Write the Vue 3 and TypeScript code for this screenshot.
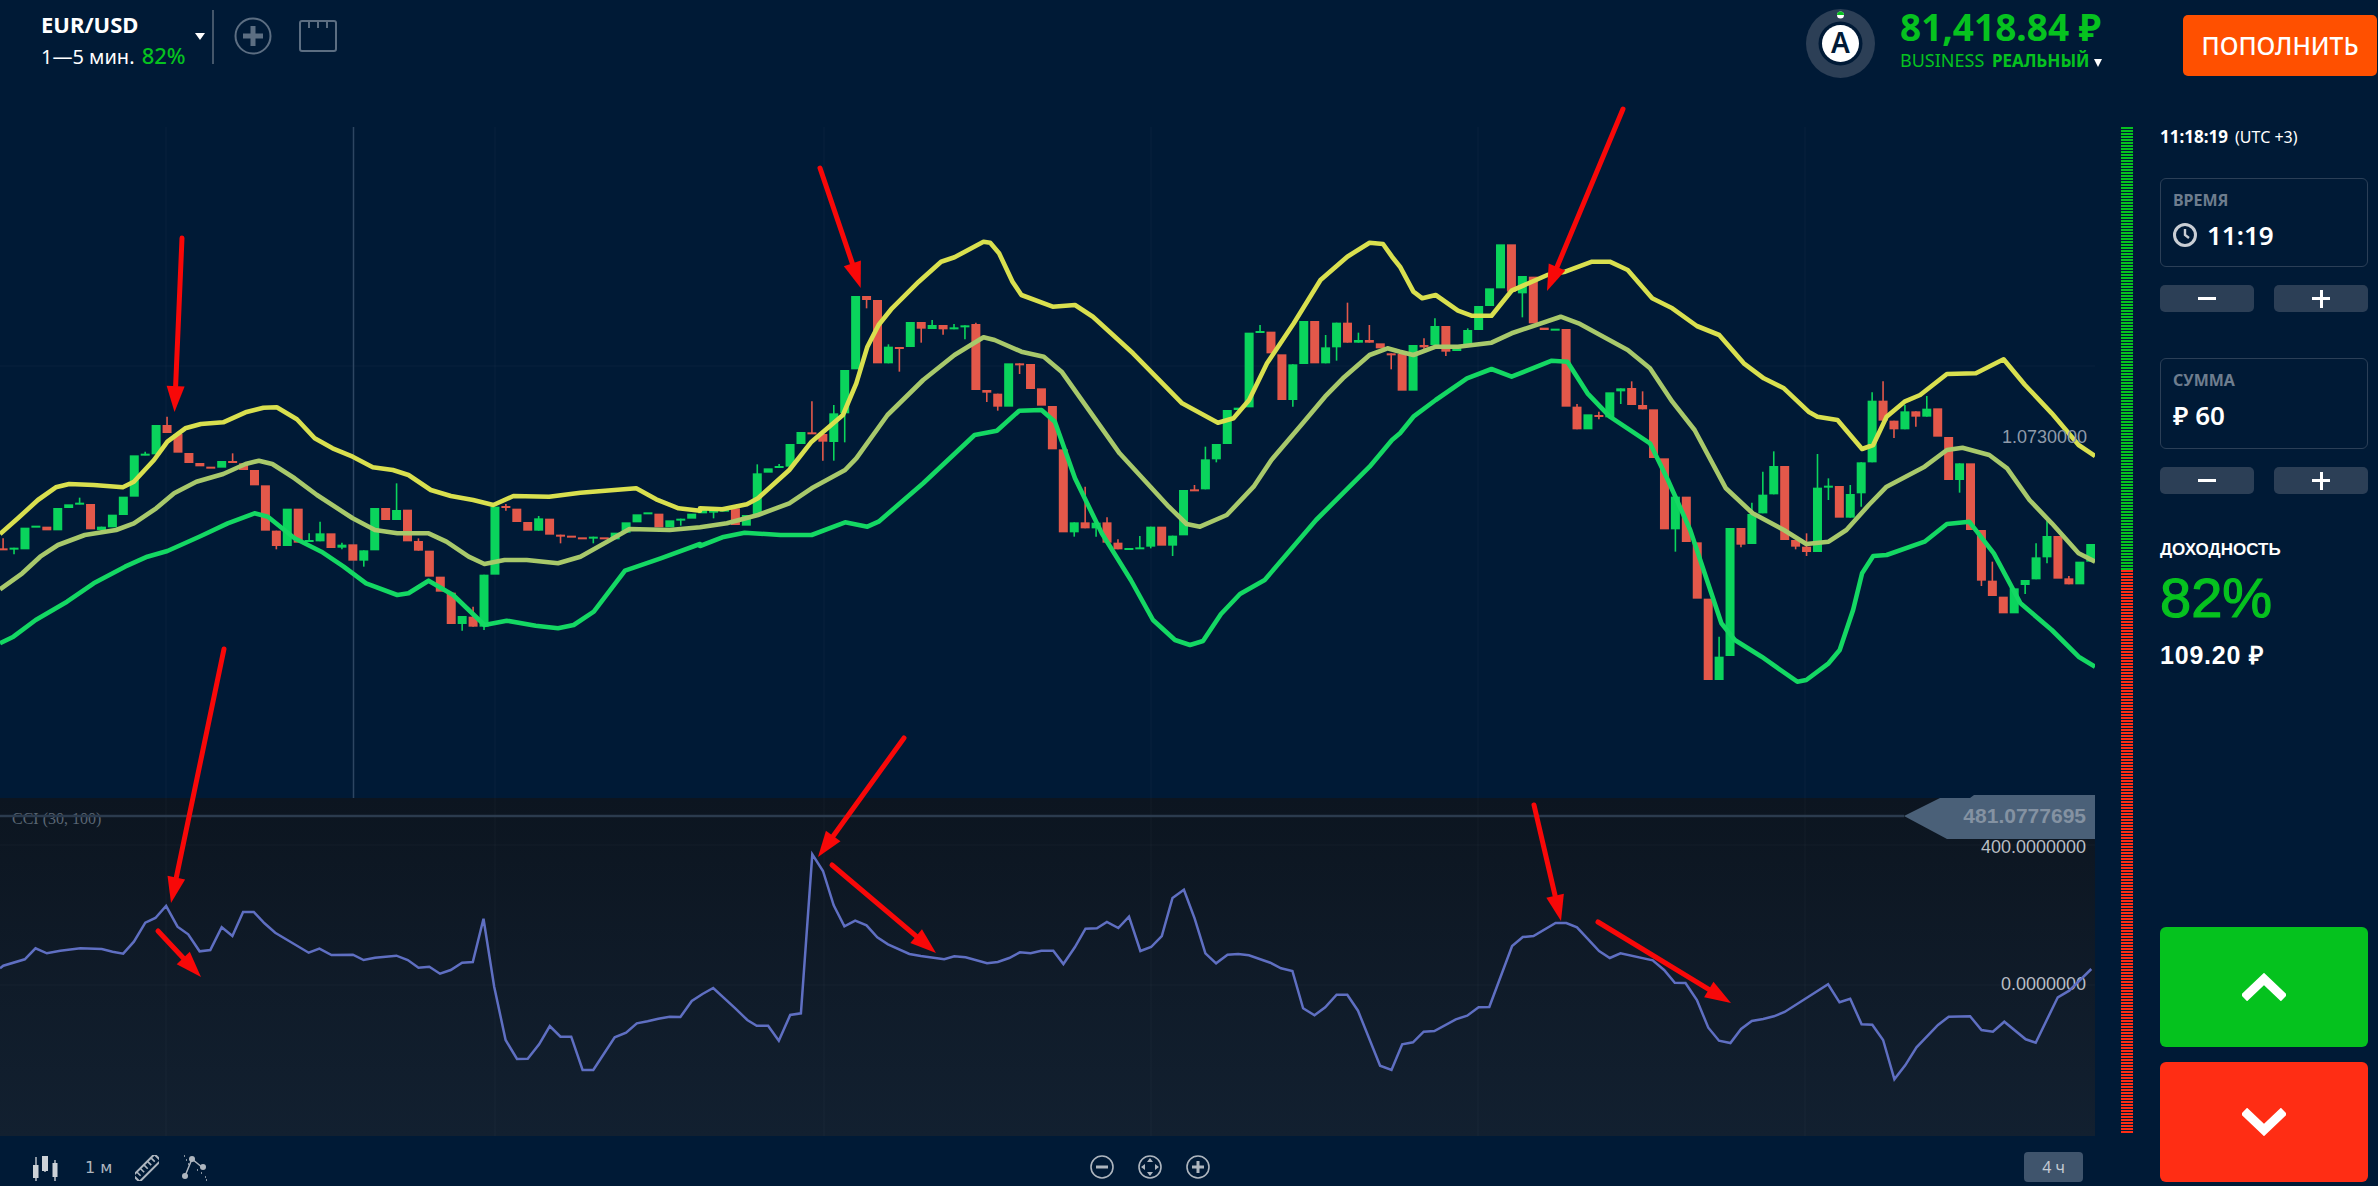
<template>
  <div class="terminal">
    <header class="topbar">
      <div class="pair">
        <div class="pair-name">EUR/USD</div>
        <div class="pair-info">1—5 мин. <b>82%</b></div>
      </div>
      <span class="caret"></span>
      <span class="divider"></span>
      <svg class="add-icon" width="38" height="38" viewBox="0 0 38 38">
        <circle cx="19" cy="19" r="17.5" fill="none" stroke="#5c6e82" stroke-width="2" />
        <path d="M19 9v20M9 19h20" stroke="#5c6e82" stroke-width="5" />
      </svg>
      <svg class="layout-icon" width="40" height="34" viewBox="0 0 40 34">
        <rect x="2" y="2" width="36" height="30" rx="2" fill="none" stroke="#5c6e82" stroke-width="2" />
        <path d="M11 2v7M20 2v7M29 2v7" stroke="#5c6e82" stroke-width="2" />
      </svg>
      <div class="account">
        <svg class="avatar" width="69" height="69" viewBox="0 0 69 69">
          <circle cx="34.5" cy="34.5" r="34.5" fill="#2c3f56" />
          <circle cx="34.5" cy="34.5" r="22" fill="#001a36" />
          <circle cx="34.5" cy="34.5" r="18.5" fill="#fff" />
          <circle cx="34.5" cy="6" r="3.5" fill="#fff" />
          <path d="M31 6a3.5 3.5 0 0 1 7 0z" fill="#06c21f" />
          <text x="34.5" y="44" text-anchor="middle" class="avatar-letter">A</text>
        </svg>
        <div class="balance">
          <div class="balance-sum">81,418.84 ₽</div>
          <div class="balance-type">BUSINESS <b>РЕАЛЬНЫЙ</b> <i></i></div>
        </div>
      </div>
      <button class="deposit">ПОПОЛНИТЬ</button>
    </header>

    <div class="workspace">
      <div class="chart-col">
        <svg class="chart" width="2095" height="1052" viewBox="0 84 2095 1052">
          <defs>
            <linearGradient id="paneBg" x1="0" y1="0" x2="0" y2="1">
              <stop offset="0" stop-color="#0c1520" />
              <stop offset="1" stop-color="#122030" />
            </linearGradient>
          </defs>
          <rect x="0" y="798" width="2095" height="338" fill="url(#paneBg)" />
          <path v-for="x in gridX" :key="x" :d="`M${x} 127V1136`" class="grid" />
          <path d="M0 366H2095M0 845H2095M0 985H2095" class="grid" />
          <path d="M353.5 127V798" class="cross" />

          <g v-for="(c, i) in candles" :key="i" :fill="c.color" :stroke="c.color">
            <path v-if="c.wick" :d="c.wick" stroke-width="1.6" fill="none" />
            <rect :x="c.x - 4.5" :y="c.top" width="9" :height="c.height" stroke="none" />
          </g>

          <polyline :points="upperBand" class="band" stroke="#d9e04f" />
          <polyline :points="middleBand" class="band" stroke="#a8c96b" />
          <polyline :points="lowerBand" class="band" stroke="#14d863" />

          <text x="12" y="824" class="cci-name">CCI (30, 100)</text>
          <path d="M0 816H1904" class="level" />
          <polygon points="1904,816 1940,798 1970,798 1974,795 2095,795 2095,839 1947,839" fill="#4a6078" />
          <text x="2086" y="823" class="tag-text">481.0777695</text>
          <text x="2086" y="853" class="axis">400.0000000</text>
          <text x="2086" y="990" class="axis">0.0000000</text>
          <text x="2087" y="443" class="axis dim">1.0730000</text>
          <polyline :points="cciLine" class="cci" />

          <g v-for="(a, i) in arrows" :key="'a' + i">
            <line :x1="a.x1" :y1="a.y1" :x2="a.x2" :y2="a.y2" class="arrow-line" />
            <polygon :points="a.head" fill="#f80808" />
          </g>
        </svg>

        <footer class="toolbar">
          <div class="tools">
            <svg width="26" height="26" viewBox="0 0 26 26">
              <path d="M3 2v24M12 1v16M22 5v21" stroke="#c4c9cf" stroke-width="1.4" />
              <rect x="0" y="10" width="5.5" height="13" fill="#cdd2d7" />
              <rect x="9" y="1" width="6" height="15" fill="#cdd2d7" />
              <rect x="19.5" y="8" width="5" height="14" fill="#cdd2d7" />
            </svg>
            <span class="interval">1 м</span>
            <svg width="24" height="26" viewBox="0 0 24 26">
              <g transform="rotate(-45 12 13)" fill="none" stroke="#aeb6bf" stroke-width="2">
                <rect x="-3" y="8.5" width="30" height="9" />
                <path d="M2 9v5M7 9v5M12 9v5M17 9v5M22 9v5" stroke-width="1.6" />
              </g>
            </svg>
            <svg width="26" height="26" viewBox="0 0 26 26">
              <path d="M10 4 3 21M10 4l11 9" stroke="#aeb6bf" stroke-width="1.5" fill="none" />
              <circle cx="10" cy="4" r="3" fill="#aeb6bf" />
              <circle cx="21" cy="12" r="3" fill="#aeb6bf" />
              <circle cx="3" cy="21" r="3" fill="#aeb6bf" />
              <path d="M2 1h1M4 5h1M6 9h1M15 15h1M19 18h1M23 22h1M24 25h1" stroke="#aeb6bf" stroke-width="1.5" />
            </svg>
          </div>
          <div class="zoom-tools">
            <svg width="24" height="24" viewBox="0 0 24 24">
              <circle cx="12" cy="12" r="11" class="ring" />
              <path d="M6 12h12" stroke="#aeb6bf" stroke-width="3" />
            </svg>
            <svg width="24" height="24" viewBox="0 0 24 24">
              <circle cx="12" cy="12" r="11" class="ring" />
              <path d="M12 3l3 4H9zM12 21l-3-4h6zM3 12l4-3v6zM21 12l-4 3V9z" fill="#aeb6bf" />
            </svg>
            <svg width="24" height="24" viewBox="0 0 24 24">
              <circle cx="12" cy="12" r="11" class="ring" />
              <path d="M6 12h12M12 6v12" stroke="#aeb6bf" stroke-width="3" />
            </svg>
          </div>
          <span class="range">4 ч</span>
        </footer>
      </div>

      <div class="meter">
        <div class="meter-up"></div>
        <div class="meter-down"></div>
      </div>

      <aside class="sidebar">
        <div class="clock"><b>11:18:19</b> (UTC +3)</div>

        <div class="field field-time">
          <div class="field-label">ВРЕМЯ</div>
          <div class="field-value">
            <svg width="24" height="24" viewBox="0 0 24 24">
              <circle cx="12" cy="12" r="10.5" fill="none" stroke="#c9ced4" stroke-width="3" />
              <path d="M12 6v6l4 3" fill="none" stroke="#c9ced4" stroke-width="2.4" />
            </svg>
            11:19
          </div>
        </div>
        <div class="stepper">
          <button><span class="minus"></span></button>
          <button><span class="plus"></span></button>
        </div>

        <div class="field field-sum">
          <div class="field-label">СУММА</div>
          <div class="field-value">₽ 60</div>
        </div>
        <div class="stepper">
          <button><span class="minus"></span></button>
          <button><span class="plus"></span></button>
        </div>

        <div class="payout-label">ДОХОДНОСТЬ</div>
        <div class="payout-pct">82%</div>
        <div class="payout-sum">109.20 ₽</div>

        <button class="trade up">
          <svg width="44" height="28" viewBox="0 0 44 28"><path d="M2 25 22 6l20 19" fill="none" stroke="#fff" stroke-width="9" /></svg>
        </button>
        <button class="trade down">
          <svg width="44" height="28" viewBox="0 0 44 28"><path d="M2 3l20 19L42 3" fill="none" stroke="#fff" stroke-width="9" /></svg>
        </button>
      </aside>
    </div>
  </div>
</template>

<script setup lang="ts">
type Pt = [number, number];
// [green?, body top, body bottom, wick top, wick bottom]
type Raw = [number, number, number, number?, number?];

const gridX = [166, 495, 824, 1151, 1478, 1805];

// the numbers are read off zoomed crops, so each block carries its crop origin and scale
const crop = (ox: number, oy: number, sx: number, pts: Pt[]): Pt[] =>
  pts.map(([x, y]) => [ox + x / sx, oy + y / 3] as Pt);
const toPoints = (pts: Pt[]) => pts.map(([x, y]) => `${x.toFixed(1)},${y.toFixed(1)}`).join(' ');

const upperBand = toPoints([
  ...crop(0, 360, 2.24, [[0, 522], [40, 475], [85, 420], [125, 382], [155, 372], [210, 375], [275, 382], [300, 365], [345, 300], [375, 245], [415, 205], [450, 192], [500, 187], [550, 157], [590, 143], [620, 142], [665, 178], [705, 235], [745, 265], [790, 290], [835, 322], [880, 330], [915, 345], [965, 390], [1010, 408], [1060, 420], [1105, 435], [1150, 408], [1230, 410], [1300, 398], [1425, 385], [1470, 418], [1520, 445], [1568, 452]]),
  ...crop(700, 240, 2.24, [[0, 805], [50, 808], [105, 793], [130, 775], [200, 690], [250, 605], [320, 525], [350, 430], [375, 320], [400, 255], [430, 205], [490, 125], [540, 65], [570, 52], [635, 5], [650, 8], [670, 40], [700, 125], [720, 165], [790, 200], [840, 195], [880, 230], [970, 340], [1080, 490], [1160, 548], [1195, 535], [1230, 480], [1270, 370], [1330, 250], [1390, 120], [1450, 50], [1500, 8], [1530, 12], [1550, 50]]),
  ...crop(1400, 220, 2.24, [[0, 140], [30, 215], [50, 235], [80, 225], [130, 272], [160, 287], [205, 287], [250, 212], [330, 165], [370, 155], [430, 125], [470, 125], [510, 150], [565, 235], [610, 265], [665, 318], [715, 345], [770, 430], [815, 475], [860, 505], [915, 575], [935, 590], [980, 600], [1035, 687], [1060, 675], [1090, 590], [1130, 545], [1165, 525], [1225, 462], [1290, 460], [1352, 418], [1400, 495], [1460, 580], [1520, 675], [1557, 708]]),
]);

const middleBand = toPoints([
  ...crop(0, 360, 2.24, [[0, 688], [50, 640], [90, 590], [130, 555], [190, 525], [260, 510], [300, 490], [350, 445], [390, 400], [440, 365], [500, 342], [550, 312], [580, 302], [610, 312], [660, 355], [710, 405], [790, 475], [840, 510], [890, 520], [960, 520], [1000, 545], [1050, 590], [1085, 612], [1130, 600], [1180, 600], [1250, 610], [1300, 590], [1360, 545], [1410, 507], [1500, 510], [1568, 502]]),
  ...crop(700, 240, 2.24, [[0, 862], [60, 850], [130, 825], [200, 790], [250, 745], [325, 690], [350, 655], [420, 525], [500, 420], [570, 345], [635, 292], [660, 300], [720, 335], [770, 350], [810, 395], [940, 640], [1050, 800], [1090, 852], [1120, 860], [1180, 825], [1240, 740], [1280, 660], [1350, 550], [1400, 470], [1440, 415], [1500, 345], [1540, 325]]),
  ...crop(1400, 220, 2.24, [[0, 395], [30, 405], [80, 380], [130, 380], [205, 368], [250, 340], [360, 290], [400, 310], [510, 390], [560, 445], [610, 545], [660, 630], [730, 805], [790, 880], [860, 930], [910, 972], [960, 965], [1000, 930], [1050, 855], [1090, 800], [1175, 740], [1225, 690], [1260, 683], [1320, 705], [1360, 745], [1410, 840], [1460, 910], [1520, 1000], [1557, 1025]]),
]);

const lowerBand = toPoints([
  ...crop(0, 360, 2.24, [[0, 850], [30, 830], [80, 780], [150, 725], [210, 670], [280, 620], [330, 590], [375, 573], [450, 528], [510, 490], [570, 460], [600, 470], [660, 535], [720, 575], [770, 620], [820, 670], [890, 705], [915, 700], [960, 662], [1015, 705], [1085, 795], [1135, 782], [1200, 797], [1250, 805], [1285, 795], [1330, 755], [1400, 632], [1480, 595], [1568, 552]]),
  ...crop(700, 240, 2.24, [[0, 918], [50, 892], [100, 878], [180, 885], [250, 885], [325, 847], [375, 860], [400, 845], [500, 730], [615, 585], [665, 572], [715, 512], [765, 510], [795, 545], [840, 715], [900, 880], [965, 1020]]),
  // the valley drops below that crop
  [1153, 620], [1175, 640], [1190, 645], [1203, 641], [1221, 614], [1240, 594],
  ...crop(700, 240, 2.24, [[1265, 1020], [1380, 840], [1500, 680], [1550, 600]]),
  ...crop(1400, 220, 2.24, [[0, 640], [30, 590], [80, 540], [150, 475], [205, 447], [250, 470], [340, 422], [375, 425], [420, 520], [470, 590], [560, 670], [600, 780], [650, 930], [720, 1210], [750, 1260], [810, 1310], [890, 1385], [910, 1380], [960, 1330], [985, 1290], [1015, 1170], [1035, 1060], [1060, 1008], [1090, 1005], [1175, 965], [1225, 912], [1275, 905], [1330, 1000], [1390, 1150], [1460, 1230], [1520, 1310], [1557, 1340]]),
]);

const cciLine = toPoints([
  ...crop(0, 800, 1.4933, [[0, 505], [5, 497], [37, 478], [53, 445], [70, 460], [90, 452], [120, 445], [152, 447], [168, 455], [184, 461], [200, 425], [217, 368], [232, 354], [248, 318], [265, 380], [281, 403], [298, 454], [314, 450], [331, 382], [347, 408], [363, 336], [379, 336], [395, 370], [411, 398], [461, 458], [477, 446], [495, 465], [527, 464], [543, 480], [560, 473], [592, 467], [609, 480], [625, 503], [641, 500], [657, 521], [673, 510], [690, 488], [706, 486], [722, 356], [738, 560], [755, 720], [772, 777], [788, 776], [805, 733], [821, 678], [837, 710], [853, 710], [870, 810], [886, 810], [918, 712], [935, 698], [951, 670], [967, 664], [983, 656], [1000, 650], [1016, 651], [1033, 603], [1049, 582], [1065, 564], [1098, 625], [1116, 660], [1130, 677], [1147, 677], [1163, 722], [1180, 645], [1196, 640], [1213, 163], [1229, 213], [1245, 316], [1261, 379], [1277, 362], [1294, 376], [1310, 412], [1326, 433], [1358, 462], [1375, 468], [1410, 478], [1425, 469], [1442, 472], [1474, 490], [1490, 486], [1507, 474], [1523, 457], [1539, 460], [1555, 452]]),
  ...crop(1050, 800, 1.4933, [[5, 452], [20, 492], [37, 442], [53, 386], [70, 385], [85, 366], [102, 384], [118, 350], [135, 453], [151, 441], [167, 408], [183, 294], [200, 269], [216, 355], [232, 460], [248, 490], [265, 464], [281, 462], [297, 466], [329, 488], [345, 505], [362, 513], [378, 625], [395, 646], [411, 622], [428, 584], [444, 584], [460, 632], [493, 797], [510, 810], [526, 733], [542, 727], [558, 695], [574, 693], [606, 658], [623, 647], [640, 622], [656, 621], [690, 438], [706, 411], [722, 408], [755, 369], [771, 369], [787, 382], [820, 453], [836, 474], [852, 460], [900, 481], [917, 510], [933, 548], [949, 549], [966, 600], [983, 683], [999, 722], [1016, 729], [1032, 687], [1048, 663], [1065, 657], [1081, 649], [1097, 636], [1162, 553], [1179, 607], [1195, 596], [1212, 673], [1228, 674], [1244, 720], [1261, 838], [1277, 796], [1294, 742], [1326, 675], [1342, 650], [1374, 649], [1391, 690], [1408, 695], [1425, 665], [1457, 718], [1472, 728], [1505, 592], [1522, 572], [1555, 507]]),
]);

const rawA: Raw[] = [
  [0, 565, 570, 535], [1, 563, 568, 563, 583], [1, 503, 568], [1, 497, 502], [0, 500, 511], [1, 444, 511], [1, 433, 444], [1, 428, 433, 413],
  [0, 432, 508], [1, 500, 510, 500, 513], [1, 464, 502], [1, 410, 465], [1, 286, 410], [1, 281, 286, 275], [1, 195, 283], [0, 195, 219, 170],
  [0, 222, 278], [0, 279, 309], [0, 309, 319], [0, 320, 326], [1, 303, 323], [0, 303, 309, 280], [0, 310, 330], [0, 330, 376],
  [0, 376, 512], [0, 512, 558, 512, 568], [1, 446, 558], [0, 446, 548], [1, 540, 545, 520], [1, 520, 544, 485], [0, 520, 564], [1, 554, 563, 548, 568],
  [0, 553, 602], [1, 571, 602, 571, 620], [1, 444, 571], [0, 444, 480], [1, 450, 480, 370], [0, 449, 544], [0, 543, 572, 535], [0, 572, 650],
  [0, 650, 695], [0, 698, 792], [1, 768, 792, 768, 812], [0, 770, 800, 740], [1, 644, 800, 644, 810], [1, 440, 644], [0, 438, 444, 432, 452], [0, 446, 486],
  [0, 486, 512], [1, 475, 512, 468], [0, 476, 524], [0, 524, 530, 524, 550], [0, 527, 532], [0, 532, 537], [1, 530, 535, 530, 550], [0, 532, 538],
  [1, 518, 538], [1, 487, 518], [1, 463, 487], [1, 457, 462], [0, 461, 502], [1, 481, 502], [1, 476, 481, 476, 497], [1, 461, 476],
];
const rawB: Raw[] = [
  [1, 805, 820], [1, 810, 818, 810, 835], [1, 805, 815], [0, 805, 855], [1, 825, 857], [1, 700, 825, 673], [1, 685, 698], [1, 678, 684, 672],
  [1, 612, 680], [1, 576, 612], [0, 577, 582, 484], [0, 582, 605, 582, 662], [1, 520, 606, 495, 662], [1, 390, 520, 390, 607], [1, 168, 388], [0, 168, 180, 168, 205],
  [0, 180, 370], [1, 320, 370, 313], [0, 321, 325, 321, 395], [1, 246, 321], [0, 246, 266, 246, 308], [1, 255, 267, 240], [0, 255, 268, 255, 284], [1, 262, 268, 252],
  [1, 256, 260, 256, 298], [0, 252, 450, 248], [0, 450, 458, 450, 486], [0, 461, 500, 461, 512], [1, 370, 500], [0, 370, 374, 370, 402], [0, 372, 447], [0, 445, 497],
  [0, 498, 628], [0, 628, 877], [1, 847, 877, 847, 890], [0, 847, 865, 740], [1, 848, 865, 848, 890], [0, 847, 908, 832], [0, 908, 928, 898], [1, 924, 928],
  [1, 922, 926, 888], [1, 860, 920, 860, 925], [0, 860, 917], [1, 887, 917, 887, 948], [1, 750, 886], [0, 748, 752, 735], [1, 658, 748, 620], [1, 612, 658, 612, 667],
  [1, 510, 612], [1, 503, 510], [1, 278, 502], [1, 273, 278, 255], [0, 275, 340], [0, 343, 480], [1, 373, 480, 373, 500], [1, 243, 372],
  [0, 243, 370], [1, 322, 370, 285], [1, 248, 322, 248, 362], [0, 248, 308, 188], [1, 300, 308, 278], [0, 300, 308, 255], [0, 310, 325], [0, 340, 345, 340, 388],
];
const rawC: Raw[] = [
  [0, 402, 512], [1, 375, 512], [0, 375, 382, 355, 398], [1, 318, 375, 295], [0, 318, 395, 318, 408], [1, 375, 393], [1, 330, 375, 325], [1, 258, 330],
  [1, 205, 258], [1, 73, 205], [0, 73, 215], [1, 168, 220, 168, 292], [0, 170, 310], [0, 323, 330], [1, 326, 330], [0, 327, 560],
  [0, 560, 628, 552], [1, 583, 628], [0, 585, 590, 575, 598], [1, 517, 592], [1, 505, 514, 505, 552], [0, 504, 555, 484], [0, 555, 568, 514], [0, 568, 714],
  [0, 715, 928], [1, 830, 928, 830, 995], [0, 830, 966], [0, 967, 1136], [0, 1136, 1380], [1, 1310, 1380, 1250], [1, 924, 1308], [0, 924, 974, 924, 982],
  [1, 882, 972, 848], [1, 824, 880, 755], [1, 738, 823, 694], [0, 738, 960], [0, 960, 980, 960, 988], [0, 980, 996, 940, 1008], [1, 803, 996, 702], [1, 797, 801, 775, 840],
  [0, 798, 893], [1, 822, 893, 795], [1, 727, 820, 727, 860], [1, 542, 727, 517], [0, 542, 602, 484], [0, 602, 628, 602, 654], [1, 574, 628, 555], [0, 574, 590, 574, 620],
  [1, 566, 590, 528], [0, 565, 650], [0, 651, 780], [1, 730, 780, 730, 818], [0, 730, 930], [0, 930, 1082, 930, 1098], [0, 1082, 1128, 1025], [0, 1130, 1180],
  [1, 1105, 1180], [1, 1080, 1095, 1080, 1122], [1, 1012, 1078, 970], [1, 948, 1012, 902, 1030], [0, 948, 1076], [0, 1075, 1093, 1068], [1, 1025, 1093], [1, 972, 1025],
];

const candles = [
  ...rawA.map((c) => ({ c, oy: 360 })),
  ...rawB.map((c) => ({ c, oy: 240 })),
  ...rawC.map((c) => ({ c, oy: 220 })),
].map(({ c, oy }, i) => {
  const [green, top, bottom, wickTop, wickBottom] = c;
  const x = 3.1 + 10.93 * i;
  const y = (v: number) => oy + v / 3;
  return {
    x,
    top: y(top),
    height: Math.max(y(bottom) - y(top), 2),
    color: green ? '#0ad45c' : '#e3584a',
    wick: wickTop !== undefined ? `M${x} ${y(wickTop)}V${y(wickBottom ?? bottom)}` : '',
  };
});

// hand-drawn red marks over the chart
const arrow = (x1: number, y1: number, x2: number, y2: number) => {
  const len = Math.hypot(x2 - x1, y2 - y1);
  const ux = (x2 - x1) / len;
  const uy = (y2 - y1) / len;
  const bx = x2 - ux * 26;
  const by = y2 - uy * 26;
  return {
    x1,
    y1,
    x2: bx,
    y2: by,
    head: `${x2},${y2} ${bx - uy * 9},${by + ux * 9} ${bx + uy * 9},${by - ux * 9}`,
  };
};

const arrows = [
  arrow(182, 238, 174.5, 412),
  arrow(820, 168, 860.7, 288),
  arrow(1623, 109, 1547, 291),
  arrow(224, 649, 171, 903),
  arrow(158, 931, 201, 977),
  arrow(904, 738, 818, 857),
  arrow(832, 865, 936, 953),
  arrow(1534, 805, 1561, 921),
  arrow(1598, 922, 1731, 1003),
];
</script>

<style scoped>
.terminal {
  width: 2378px;
  height: 1186px;
  overflow: hidden;
  background: #001a36;
  color: #fff;
  font-family: "Noto Sans", sans-serif;
  display: flex;
  flex-direction: column;
}

.topbar {
  height: 84px;
  display: flex;
  align-items: flex-start;
  flex: none;
}

.pair {
  width: 154px;
  padding: 9px 0 0 41px;
}

.pair-name {
  font-size: 22px;
  font-weight: 700;
  line-height: 30px;
}

.pair-info {
  font-size: 20px;
  line-height: 32px;
  white-space: nowrap;
}

.pair-info b {
  color: #06c21f;
  font-size: 22px;
  font-weight: 500;
  margin-left: 2px;
}

.caret {
  margin-top: 33px;
  border-left: 5.5px solid transparent;
  border-right: 5.5px solid transparent;
  border-top: 7px solid #fff;
}

.divider {
  width: 2px;
  height: 54px;
  background: #44566a;
  margin: 10px 0 0 7px;
}

.add-icon {
  margin: 17px 0 0 20px;
}

.layout-icon {
  margin: 19px 0 0 26px;
}

.account {
  margin-left: auto;
  display: flex;
}

.avatar {
  margin-top: 9px;
}

.avatar-letter {
  font-size: 28px;
  font-weight: 600;
  font-family: "Noto Sans", sans-serif;
  fill: #001a36;
}

.balance {
  width: 283px;
  margin: 5px 0 0 25px;
  color: #06c21f;
}

.balance-sum {
  font-size: 37px;
  font-weight: 700;
  line-height: 44px;
}

.balance-type {
  margin-top: -1px;
  font-size: 18px;
  line-height: 24px;
}

.balance-type b {
  font-size: 17px;
  font-weight: 700;
  margin-left: 3px;
}

.balance-type i {
  display: inline-block;
  margin-left: 0;
  border-left: 4px solid transparent;
  border-right: 4px solid transparent;
  border-top: 8px solid #fff;
}

.deposit {
  width: 194px;
  height: 61px;
  margin: 15px 1px 0 0;
  background: #ff5000;
  border: 0;
  border-radius: 5px;
  color: #fff;
  font-family: "Noto Sans", sans-serif;
  font-size: 24.5px;
  font-weight: 500;
}

.workspace {
  flex: 1;
  display: flex;
  min-height: 0;
}

.chart-col {
  width: 2095px;
  flex: none;
  display: flex;
  flex-direction: column;
}

.chart {
  display: block;
  flex: none;
}

.grid {
  stroke: #ffffff;
  stroke-opacity: 0.035;
  stroke-width: 1;
  fill: none;
}

.cross {
  stroke: #2d4662;
  stroke-width: 1.5;
}

.band {
  fill: none;
  stroke-width: 4.6;
  stroke-linejoin: round;
}

.cci {
  fill: none;
  stroke: #5f6fc2;
  stroke-width: 2.5;
}

.level {
  stroke: #2b3b4e;
  stroke-width: 2.5;
}

.cci-name {
  font-family: "Liberation Serif", serif;
  font-size: 16px;
  fill: #5a6674;
}

.tag-text {
  font-family: "Liberation Sans", sans-serif;
  font-size: 21px;
  font-weight: 700;
  fill: #8492a2;
  text-anchor: end;
}

.axis {
  font-family: "Liberation Sans", sans-serif;
  font-size: 18px;
  fill: #b9bec4;
  text-anchor: end;
}

.axis.dim {
  fill: #8f9baa;
}

.arrow-line {
  stroke: #f80808;
  stroke-width: 5;
  stroke-linecap: round;
}

.toolbar {
  flex: 1;
  display: grid;
  grid-template-columns: 1090px auto 1fr;
  align-items: start;
}

.tools {
  display: flex;
  align-items: flex-start;
  padding: 19px 0 0 33px;
}

.interval {
  margin: 2px 0 0 26px;
  width: 34px;
  font-family: "DejaVu Sans", sans-serif;
  font-size: 16px;
  color: #aeb6bf;
  line-height: 22px;
  white-space: nowrap;
}

.tools svg + .interval + svg {
  margin-left: 16px;
}

.tools svg:last-child {
  margin-left: 23px;
}

.zoom-tools {
  margin-top: 19px;
  display: flex;
  gap: 24px;
}

.ring {
  fill: none;
  stroke: #aeb6bf;
  stroke-width: 1.6;
}

.range {
  justify-self: end;
  width: 59px;
  height: 30px;
  margin: 16px 12px 0 0;
  background: #3f546c;
  border-radius: 4px;
  color: #c3cad2;
  font-size: 16px;
  line-height: 30px;
  text-align: center;
}

.meter {
  width: 12px;
  height: 1007px;
  margin: 43px 0 0 26px;
  flex: none;
  display: flex;
  flex-direction: column;
}

.meter-up {
  height: 443px;
  background: repeating-linear-gradient(to bottom, #06c21f 0 2px, #001a36 2px 3px);
}

.meter-down {
  flex: 1;
  background: repeating-linear-gradient(to bottom, #ff2d14 0 2px, #001a36 2px 3px);
}

.sidebar {
  width: 208px;
  margin-left: 27px;
  padding-top: 43px;
  display: flex;
  flex-direction: column;
  flex: none;
}

.clock {
  height: 20px;
  font-size: 16px;
  line-height: 20px;
  white-space: nowrap;
}

.clock b {
  font-size: 17px;
  font-weight: 700;
  margin-right: 3px;
}

.field {
  box-sizing: border-box;
  padding: 10px 12px;
  border: 1px solid #2b3f57;
  border-radius: 6px;
}

.field-time {
  height: 89px;
  margin-top: 31px;
}

.field-sum {
  height: 91px;
  margin-top: 46px;
}

.field-label {
  color: #6e7d8e;
  font-size: 16px;
  font-weight: 700;
  line-height: 22px;
}

.field-value {
  display: flex;
  align-items: center;
  gap: 10px;
  margin-top: 8px;
  font-size: 26px;
  font-weight: 600;
  line-height: 32px;
}

.stepper {
  display: flex;
  justify-content: space-between;
  margin-top: 18px;
}

.stepper button {
  width: 94px;
  height: 27px;
  padding: 0;
  background: #2c3f56;
  border: 0;
  border-radius: 5px;
  display: flex;
  align-items: center;
  justify-content: center;
}

.minus,
.plus {
  display: block;
  width: 18px;
  height: 3px;
  background: #fff;
  position: relative;
}

.plus::after {
  content: "";
  position: absolute;
  left: 7.5px;
  top: -7.5px;
  width: 3px;
  height: 18px;
  background: #fff;
}

.payout-label {
  margin-top: 46px;
  font-family: "Liberation Sans", sans-serif;
  font-size: 17px;
  font-weight: 700;
  line-height: 20px;
  white-space: nowrap;
}

.payout-pct {
  margin-top: 10px;
  color: #06c21f;
  font-family: "Liberation Sans", sans-serif;
  font-size: 56px;
  line-height: 56px;
  -webkit-text-stroke: 1.2px #06c21f;
}

.payout-sum {
  margin-top: 16px;
  font-family: "Liberation Sans", sans-serif;
  font-size: 25px;
  font-weight: 700;
  line-height: 26px;
  letter-spacing: 0.8px;
  white-space: nowrap;
}

.trade {
  width: 208px;
  height: 120px;
  border: 0;
  border-radius: 6px;
  padding: 0;
  display: flex;
  align-items: center;
  justify-content: center;
}

.trade.up {
  margin-top: auto;
  background: #05c21e;
}

.trade.down {
  margin: 15px 0 4px;
  background: #ff2d14;
}
</style>

<style>
html,
body {
  margin: 0;
  background: #001a36;
}
</style>
